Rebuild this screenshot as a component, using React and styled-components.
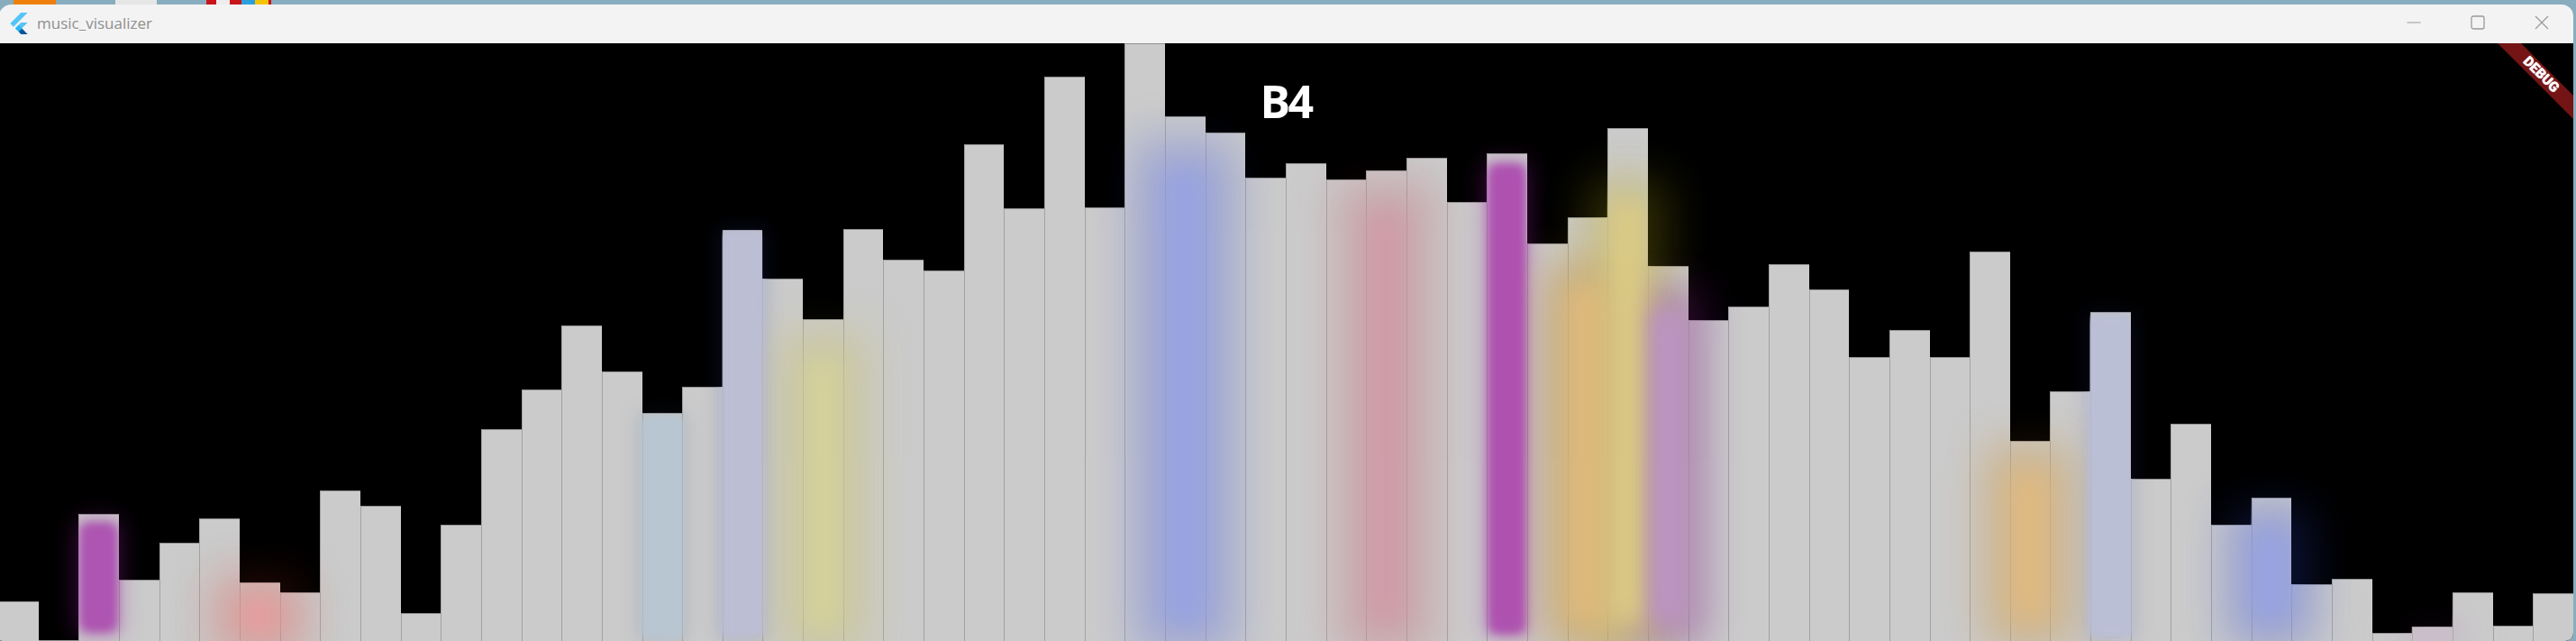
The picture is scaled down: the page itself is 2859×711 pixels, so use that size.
import styled, { createGlobalStyle } from "styled-components";

const Global = createGlobalStyle`
  html, body { margin: 0; padding: 0; height: 100%; background: #88adbe; overflow: hidden; }
`;

const BAR_W = 2857 / 64;
const CANVAS_TOP = 48;
const CANVAS_H = 663;

// top edge of every bar, in page pixels
const tops = [
  667, 711, 570, 643, 602, 575, 646, 657, 544, 561, 680, 582, 476, 432, 361, 412,
  458, 429, 255, 309, 354, 254, 288, 300, 160, 231, 85, 230, 48, 129, 147, 197,
  181, 199, 189, 175, 224, 170, 270, 241, 142, 295, 355, 340, 293, 321, 396, 366,
  396, 279, 489, 434, 346, 531, 470, 582, 552, 648, 642, 702, 695, 657, 694, 658,
];

// the notes that are lit: bar index, colour on the bars, colour on the black, width of the core,
// vertical span, softness, how far the pale wash reaches onto the neighbours
const glows = [
  { i: 2, color: "#ad55b1", dark: "#a020a8", w: 33, top: 584, bottom: 697, blur: 6, halo: 0.42, wash: 2 },
  { i: 6, color: "#ea9c9c", dark: "#b03018", w: 38, top: 668, bottom: 698, blur: 14, halo: 0.24, wash: 30 },
  { i: 16, color: "#b8c6d2", dark: "#305080", w: 42, top: 464, bottom: 706, blur: 5, halo: 0.14, wash: 0 },
  { i: 18, color: "#bcbed4", dark: "#3040a0", w: 44, top: 258, bottom: 704, blur: 4, halo: 0.16, wash: 0 },
  { i: 20, color: "#d6d29a", dark: "#a09810", w: 34, top: 400, bottom: 694, blur: 13, halo: 0.2, wash: 34 },
  { i: 29, color: "#98a3e2", dark: "#2840b8", w: 44, top: 190, bottom: 690, blur: 14, halo: 0.24, wash: 38 },
  { i: 34, color: "#cf9ba8", dark: "#a03020", w: 38, top: 235, bottom: 692, blur: 13, halo: 0.16, wash: 38 },
  { i: 37, color: "#ae52b0", dark: "#a020a8", w: 33, top: 186, bottom: 699, blur: 6, halo: 0.42, wash: 2 },
  { i: 39, color: "#e0ba7c", dark: "#a86800", w: 38, top: 320, bottom: 690, blur: 14, halo: 0.34, wash: 26 },
  { i: 40, color: "#dccb85", dark: "#a09810", w: 36, top: 225, bottom: 690, blur: 13, halo: 0.3, wash: 22 },
  { i: 41, color: "#bc94c2", dark: "#701080", w: 36, top: 345, bottom: 690, blur: 11, halo: 0.32, wash: 14 },
  { i: 50, color: "#e0ba80", dark: "#a86800", w: 38, top: 525, bottom: 686, blur: 14, halo: 0.26, wash: 30 },
  { i: 52, color: "#bbbfd6", dark: "#3040a0", w: 44, top: 352, bottom: 704, blur: 5, halo: 0.14, wash: 0 },
  { i: 56, color: "#98a3e2", dark: "#2840b8", w: 38, top: 590, bottom: 686, blur: 13, halo: 0.28, wash: 30 },
  { i: 60, color: "#cbbccb", dark: "#702060", w: 36, top: 698, bottom: 716, blur: 10, halo: 0.14, wash: 20 },
];

const skyline = () => {
  const pts = [`0px ${CANVAS_H}px`];
  tops.forEach((t, i) => {
    const y = t - CANVAS_TOP;
    pts.push(`${i * BAR_W}px ${y}px`, `${(i + 1) * BAR_W}px ${y}px`);
  });
  pts.push(`${64 * BAR_W}px ${CANVAS_H}px`);
  return `polygon(${pts.join(",")})`;
};

const Page = styled.div`
  height: 711px;
  overflow: hidden;
  position: relative;
`;

const Desktop = styled.div`
  height: 5px;
  display: flex;
  align-items: flex-start;
`;

const Scrap = styled.div`
  height: 5px;
  width: ${(p) => p.$w}px;
  margin-left: ${(p) => p.$gap || 0}px;
  background: ${(p) => p.$color};
`;

const Window = styled.div`
  width: 2858px;
  height: 706px;
  margin-left: -2px;
  border-radius: 15px 13px 9px 5px;
  overflow: hidden;
  display: flex;
  flex-direction: column;
`;

const TitleBar = styled.div`
  height: 43px;
  flex: none;
  background: #f3f3f3;
  display: flex;
  align-items: center;
  padding-left: 13px;
`;

const AppName = styled.span`
  margin-left: 10px;
  font-family: "Open Sans", sans-serif;
  font-size: 17px;
  color: #8f8f8f;
  padding-bottom: 2px;
`;

const Controls = styled.div`
  margin-left: auto;
  display: flex;
  padding-right: 27px;
  gap: 55px;
  color: #999;
  padding-bottom: 4px;
`;

const Canvas = styled.div`
  position: relative;
  height: ${CANVAS_H}px;
  background: #000;
  overflow: hidden;
`;

const Bars = styled.div`
  height: 100%;
  display: flex;
  align-items: flex-end;
`;

const Bar = styled.div`
  flex: 1;
  box-sizing: border-box;
  background: #cbcbcb;
  border-top: 1px solid #8f8f8f;
  border-left: 1px solid #a2a2a2;
`;

const GlowLayer = styled.div`
  position: absolute;
  inset: 0;
`;

const Glow = styled.div`
  position: absolute;
  background: ${(p) => p.$color};
  filter: blur(${(p) => p.$blur}px);
`;

const Note = styled.div`
  position: absolute;
  top: 34px;
  left: 0;
  right: 0;
  text-align: center;
  font-family: "Open Sans", sans-serif;
  font-weight: 700;
  font-size: 50px;
  letter-spacing: -2.5px;
  line-height: 1.2;
  color: #fff;
`;

const Ribbon = styled.div`
  position: absolute;
  top: 0;
  right: 0;
  width: 84px;
  height: 84px;
  background: #741414;
  clip-path: polygon(0 0, 26px 0, 84px 58px, 84px 84px);
`;

const RibbonText = styled.span`
  position: absolute;
  left: 48px;
  top: 35px;
  transform: translate(-50%, -50%) rotate(45deg);
  font-family: Roboto, sans-serif;
  font-weight: 900;
  font-size: 15.3px;
  line-height: 1;
  color: #fff;
  text-shadow: 0 0 1px #fff;
`;

const FlutterLogo = () => (
  <svg width="20" height="24" viewBox="9.8 10.4 146.3 181" style={{ marginBottom: 2 }}>
    <path fill="#54c5f8" d="M37.7 128.9 9.8 101 100.4 10.4h55.7z" />
    <path fill="#54c5f8" d="M156.1 93.4h-55.7l-48.5 48.4 27.9 27.9z" />
    <path fill="#01579b" d="M79.8 169.7l20.6 21.6h55.7l-48.5-49.2z" />
    <path fill="#29b6f6" d="M79.8 169.7l27.8-27.6-27.8-27.6-27.9 27.4z" />
  </svg>
);

const MinIcon = () => (
  <svg width="16" height="16" viewBox="0 0 16 16">
    <path d="M0.5 8h15" stroke="currentColor" strokeWidth="1.2" />
  </svg>
);

const MaxIcon = () => (
  <svg width="16" height="16" viewBox="0 0 16 16">
    <rect x="1" y="1" width="14" height="14" rx="2" fill="none" stroke="currentColor" strokeWidth="1.3" />
  </svg>
);

const CloseIcon = () => (
  <svg width="16" height="16" viewBox="0 0 16 16">
    <path d="M1 1l14 14M15 1L1 15" stroke="currentColor" strokeWidth="1.2" />
  </svg>
);

const glowBox = (g, grow = 0) => ({
  left: (g.i + 0.5) * BAR_W - g.w / 2 - grow,
  width: g.w + grow * 2,
  top: g.top - CANVAS_TOP - grow,
  height: g.bottom - g.top + grow * 2,
});

export default function App() {
  return (
    <Page>
      <Global />
      <Desktop>
        <Scrap $w={47} $gap={15} $color="#ef7f0a" />
        <Scrap $w={46} $gap={66} $color="#e6e6e6" />
        <Scrap $w={11} $gap={55} $color="#c9141a" />
        <Scrap $w={15} $color="#ececec" />
        <Scrap $w={13} $color="#c9141a" />
        <Scrap $w={15} $color="#2a9fe0" />
        <Scrap $w={15} $color="#f5c400" />
        <Scrap $w={3} $color="#c9141a" />
      </Desktop>
      <Window>
        <TitleBar>
          <FlutterLogo />
          <AppName>music_visualizer</AppName>
          <Controls>
            <MinIcon />
            <MaxIcon />
            <CloseIcon />
          </Controls>
        </TitleBar>
        <Canvas>
          <GlowLayer>
            {glows.map((g) => (
              <Glow
                key={g.i}
                $color={g.dark}
                $blur={g.blur * 1.5 + 5}
                style={{ ...glowBox(g, g.blur > 10 ? 26 : 6), opacity: g.halo }}
              />
            ))}
          </GlowLayer>
          <Bars>
            {tops.map((t, i) => (
              <Bar key={i} style={{ height: 711 - t }} />
            ))}
          </Bars>
          <GlowLayer style={{ clipPath: skyline() }}>
            {glows.map((g) => (
              <Glow
                key={g.i}
                $color={g.color}
                $blur={g.wash > 2 ? 24 : g.blur}
                style={{ ...glowBox(g, g.wash), opacity: g.wash > 2 ? 0.42 : 1 }}
              />
            ))}
            {glows.map((g) => (
              <Glow key={g.i} $color={g.color} $blur={g.blur} style={glowBox(g)} />
            ))}
          </GlowLayer>
          <Note>B4</Note>
          <Ribbon>
            <RibbonText>DEBUG</RibbonText>
          </Ribbon>
        </Canvas>
      </Window>
    </Page>
  );
}
